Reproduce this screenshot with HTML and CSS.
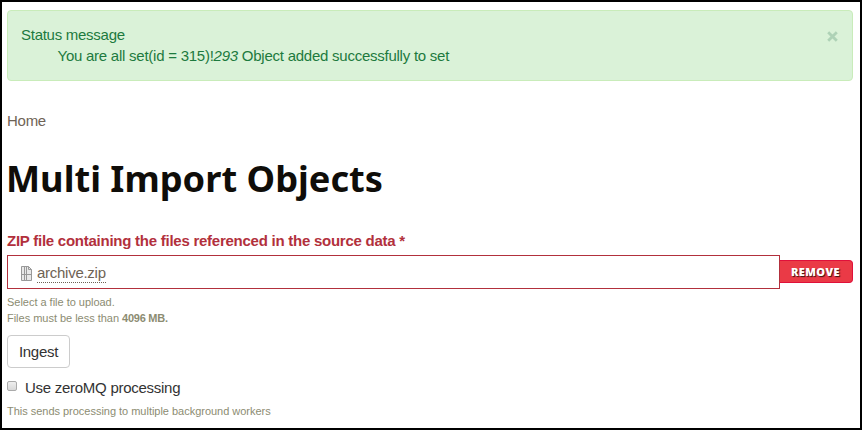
FILE: index.html
```html
<!DOCTYPE html>
<html lang="en">
<head>
<meta charset="utf-8">
<title>Multi Import Objects</title>
<link rel="stylesheet" href="styles.css">
</head>
<body>
<main class="page">
  <section class="alert">
    <div class="alert-text">
      <h2 class="alert-title">Status message</h2>
      <p class="alert-body">You are all set(id = 315)!<em>293</em> Object added successfully to set</p>
    </div>
    <button class="close" type="button" aria-label="Close"><svg width="11" height="11" viewBox="0 0 11 11"><path d="M1.2 1.2 9.8 9.8M9.8 1.2 1.2 9.8"/></svg></button>
  </section>
  <nav class="breadcrumb"><a>Home</a></nav>
  <h1 class="title">Multi Import Objects</h1>
  <form class="form">
    <label class="field-label">ZIP file containing the files referenced in the source data *</label>
    <div class="file-row">
      <div class="file-box">
        <svg class="file-icon" width="12" height="16" viewBox="0 0 12 16">
          <path class="sheet" d="M1.5 1.5H8.5L11.5 4.5V15.5H1.5Z"/>
          <path class="zip" d="M4.5 1.5V15.5M6.5 1.5V15.5M1.5 9.5H11.5M8.5 1.5V4.5H11.5"/>
        </svg>
        <a class="file-name">archive.zip</a>
      </div>
      <button class="remove" type="button">REMOVE</button>
    </div>
    <p class="help">Select a file to upload.<br>Files must be less than <strong>4096 MB.</strong></p>
    <button class="ingest" type="button">Ingest</button>
    <label class="check"><span class="box"></span><span class="check-text">Use zeroMQ processing</span></label>
    <p class="help help-last">This sends processing to multiple background workers</p>
  </form>
</main>
</body>
</html>
```

FILE: styles.css
```css
* {
  box-sizing: border-box;
}

body {
  margin: 0;
  background: #fff;
  color: #333;
  font-family: "Liberation Sans", Arial, sans-serif;
  font-size: 15px;
  line-height: 21px;
  letter-spacing: -0.27px;
  white-space: nowrap;
}

h1, h2, p {
  margin: 0;
}

button {
  font: inherit;
  letter-spacing: inherit;
}

.page {
  height: 430px;
  padding: 8px 7px 0 5px;
  border: 2px solid #000;
  overflow: hidden;
}

.alert {
  display: flex;
  justify-content: space-between;
  height: 71px;
  padding: 13px 14px 0 13px;
  border: 1px solid #c9ecba;
  border-radius: 4px;
  background: #daf2d8;
  color: #1d7a3e;
}

.alert-title {
  font-size: 15px;
  font-weight: 400;
}

.alert-body {
  padding-left: 36.5px;
  letter-spacing: -0.245px;
}

.close {
  height: 11px;
  margin-top: 7px;
  padding: 0;
  border: 0;
  background: none;
}

.close svg {
  display: block;
  fill: none;
  stroke: #aed2b6;
  stroke-width: 2.8;
}

.breadcrumb {
  margin-top: 29px;
  color: #6f6355;
}

.title {
  margin-top: 20px;
  margin-left: -1px;
  color: #0f0d09;
  font: 700 36.2px/55px "Noto Sans", "Open Sans", sans-serif;
  letter-spacing: 0;
}

.field-label {
  display: block;
  margin-top: 24px;
  color: #b2303c;
  font-weight: 700;
  letter-spacing: -0.25px;
}

.file-row {
  display: flex;
  align-items: center;
  margin-top: 4px;
}

.file-box {
  display: flex;
  align-items: center;
  flex: 1;
  height: 34px;
  padding: 1px 12px 0;
  border: 1px solid #b2303c;
}

.file-icon {
  margin: 0 5px 0 0;
  fill: none;
  stroke: #999;
}

.file-icon .sheet {
  fill: #e9e9e9;
}

.file-name {
  height: 20px;
  border-bottom: 1px dotted #6f6355;
  color: #6f6355;
  line-height: 20px;
}

.remove {
  width: 73px;
  height: 23px;
  margin-bottom: 1px;
  padding: 0 1px 0 0;
  border: 1px solid #e0103a;
  border-left: 0;
  border-radius: 0 4px 4px 0;
  background: #ea3a46;
  color: #fff;
  font: 800 11px/21px "Open Sans", "Noto Sans", sans-serif;
  letter-spacing: 0.4px;
  text-shadow: 1px 1px 1px #401010;
}

.help {
  margin-top: 5px;
  color: #8c8c72;
  font-size: 11px;
  line-height: 16px;
  letter-spacing: -0.02px;
}

.help strong {
  letter-spacing: -0.25px;
}

.ingest {
  display: block;
  width: 63px;
  height: 33px;
  margin-top: 9px;
  padding: 0;
  border: 1px solid #ccc;
  border-radius: 4px;
  background: #fff;
  color: #333;
}

.check {
  display: flex;
  margin-top: 9px;
}

.box {
  width: 10px;
  height: 10px;
  margin: 4px 8px 0 0;
  border: 1px solid #aaa;
  border-radius: 2px;
  background: linear-gradient(#eee, #d8d8d8);
}

.help-last {
  margin-top: 5px;
}
```
